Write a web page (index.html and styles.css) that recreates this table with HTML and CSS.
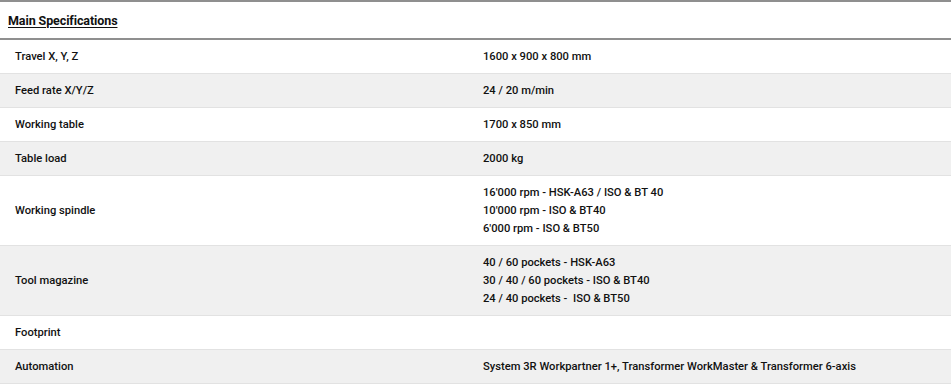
FILE: index.html
```html
<!DOCTYPE html>
<html>
<head>
<meta charset="utf-8">
<link rel="stylesheet" href="styles.css">
</head>
<body>
<div class="specs">
  <div class="specs-head"><span class="title">Main Specifications</span></div>
  <div class="row">
    <div class="label">Travel X, Y, Z</div>
    <div class="value">1600 x 900 x 800 mm</div>
  </div>
  <div class="row alt">
    <div class="label">Feed rate X/Y/Z</div>
    <div class="value">24 / 20 m/min</div>
  </div>
  <div class="row">
    <div class="label">Working table</div>
    <div class="value">1700 x 850 mm</div>
  </div>
  <div class="row alt">
    <div class="label">Table load</div>
    <div class="value">2000 kg</div>
  </div>
  <div class="row">
    <div class="label">Working spindle</div>
    <div class="value">16'000 rpm - HSK-A63 / ISO &amp; BT 40<br>10'000 rpm - ISO &amp; BT40<br>6'000 rpm - ISO &amp; BT50</div>
  </div>
  <div class="row alt">
    <div class="label">Tool magazine</div>
    <div class="value">40 / 60 pockets - HSK-A63<br>30 / 40 / 60 pockets - ISO &amp; BT40<br>24 / 40 pockets - &nbsp;ISO &amp; BT50</div>
  </div>
  <div class="row">
    <div class="label">Footprint</div>
    <div class="value"></div>
  </div>
  <div class="row alt">
    <div class="label">Automation</div>
    <div class="value">System 3R Workpartner 1+, Transformer WorkMaster &amp; Transformer 6-axis</div>
  </div>
</div>
</body>
</html>
```
FILE: styles.css
```css
html, body {
  margin: 0;
  padding: 0;
  background: #ffffff;
}
body {
  font-family: Roboto, "Liberation Sans", sans-serif;
  color: #111111;
}
.specs {
  width: 951px;
}
.specs-head {
  border-top: 2px solid #8f8f8f;
  border-bottom: 2px solid #8f8f8f;
  display: flex;
  align-items: center;
  padding-left: 8px;
  box-sizing: border-box;
  height: 40px;
}
.title {
  font-size: 12.5px;
  font-weight: 700;
  text-decoration: underline;
  text-underline-offset: 2px;
  letter-spacing: -0.1px;
}
.row {
  display: grid;
  grid-template-columns: 468px 1fr;
  align-items: center;
  border-bottom: 1px solid #e2e2e2;
  background: #ffffff;
  font-size: 11.2px;
  font-weight: 500;
  line-height: 18px;
  min-height: 33px;
}
.row:last-child {
  min-height: 33px;
}
.row.alt {
  background: #f0f0f0;
}
.label {
  padding: 7.5px 0 7.5px 15px;
}
.value {
  padding: 7.5px 0 7.5px 15px;
}
```
